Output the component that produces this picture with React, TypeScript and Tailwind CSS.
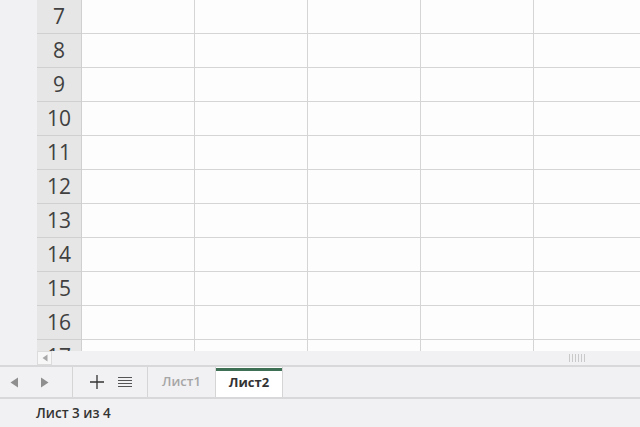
import React from 'react';

const rows = [7, 8, 9, 10, 11, 12, 13, 14, 15, 16, 17];
const cols = ['A', 'B', 'C', 'D', 'E'];

const TriLeft = ({ className = '' }: { className?: string }) => (
  <svg width="9" height="11" viewBox="0 0 9 11" className={className}>
    <path d="M8 0.5 L0.5 5.5 L8 10.5 Z" fill="currentColor" />
  </svg>
);

const TriRight = ({ className = '' }: { className?: string }) => (
  <svg width="9" height="11" viewBox="0 0 9 11" className={className}>
    <path d="M1 0.5 L8.5 5.5 L1 10.5 Z" fill="currentColor" />
  </svg>
);

const SheetRow: React.FC<{ n: number }> = ({ n }) => (
  <div className="flex h-[34px] shrink-0">
    <div className="w-[45px] shrink-0 bg-[#e6e6e6] border-r border-b border-[#d0d0d0] flex items-center justify-center text-[21px] text-[#404040] leading-none">
      {n}
    </div>
    {cols.map((c) => (
      <div key={c} className="w-[113px] shrink-0 bg-[#fdfdfd] border-r border-b border-[#d5d5d5]" />
    ))}
  </div>
);

export default function App() {
  return (
    <div
      className="w-[640px] h-[427px] overflow-hidden flex flex-col bg-[#f1f0f2]"
      style={{ fontFamily: '"Open Sans", "Liberation Sans", sans-serif' }}
    >
      {/* grid area */}
      <div className="flex h-[351px] shrink-0">
        <div className="w-[37px] shrink-0 bg-[#f1f0f2]" />
        <div className="flex-1 overflow-hidden flex flex-col">
          {rows.map((n) => (
            <SheetRow key={n} n={n} />
          ))}
        </div>
      </div>

      {/* horizontal scrollbar */}
      <div className="flex h-[16px] shrink-0 border-b-2 border-[#d8d7d9]">
        <div className="w-[37px] shrink-0" />
        <div className="w-[15px] shrink-0 bg-[#f7f7f7] border border-[#dcdcdc] flex items-center justify-center text-[#a8a8a8]">
          <svg width="6" height="8" viewBox="0 0 6 8">
            <path d="M5.5 0.5 L0.5 4 L5.5 7.5 Z" fill="currentColor" />
          </svg>
        </div>
        <div className="flex-1 flex items-center justify-end pr-[55px]">
          <div className="flex gap-[2px] h-[8px]">
            {[0, 1, 2, 3, 4, 5].map((i) => (
              <div key={i} className="w-[1px] h-full bg-[#c9c9c9]" />
            ))}
          </div>
        </div>
      </div>

      {/* sheet tabs */}
      <div className="flex h-[32px] shrink-0 border-b-2 border-[#d8d7d9]">
        <div className="w-[73px] shrink-0 flex items-center border-r border-[#d5d5d5]">
          <TriLeft className="ml-[10px] text-[#8f8f8f]" />
          <TriRight className="ml-[21px] text-[#8f8f8f]" />
        </div>
        <div className="w-[75px] shrink-0 flex items-center border-r border-[#d5d5d5]">
          <svg width="16" height="16" viewBox="0 0 16 16" className="ml-[16px] text-[#333]">
            <path d="M8 1 V15 M1 8 H15" stroke="currentColor" strokeWidth="1.3" />
          </svg>
          <svg width="14" height="12" viewBox="0 0 14 12" className="ml-[13px] text-[#555]">
            <path d="M0 1.5 H14 M0 4.5 H14 M0 7.5 H14 M0 10.5 H14" stroke="currentColor" strokeWidth="1" />
          </svg>
        </div>
        <div className="w-[68px] shrink-0 flex items-center justify-center border-r border-[#d5d5d5] text-[13px] font-semibold text-[#a6a6a6]">
          Лист1
        </div>
        <div className="w-[67px] shrink-0 flex flex-col bg-white border-r border-[#d5d5d5]">
          <div className="h-[3px] mt-[1px] bg-[#3e7055]" />
          <div className="flex-1 flex items-center justify-center text-[13px] font-bold text-[#333] pb-[2px]">
            Лист2
          </div>
        </div>
        <div className="flex-1" />
      </div>

      {/* status bar */}
      <div className="flex-1 flex items-center pl-[36px] text-[13.5px] font-semibold text-[#333]">
        Лист 3 из 4
      </div>
    </div>
  );
}
